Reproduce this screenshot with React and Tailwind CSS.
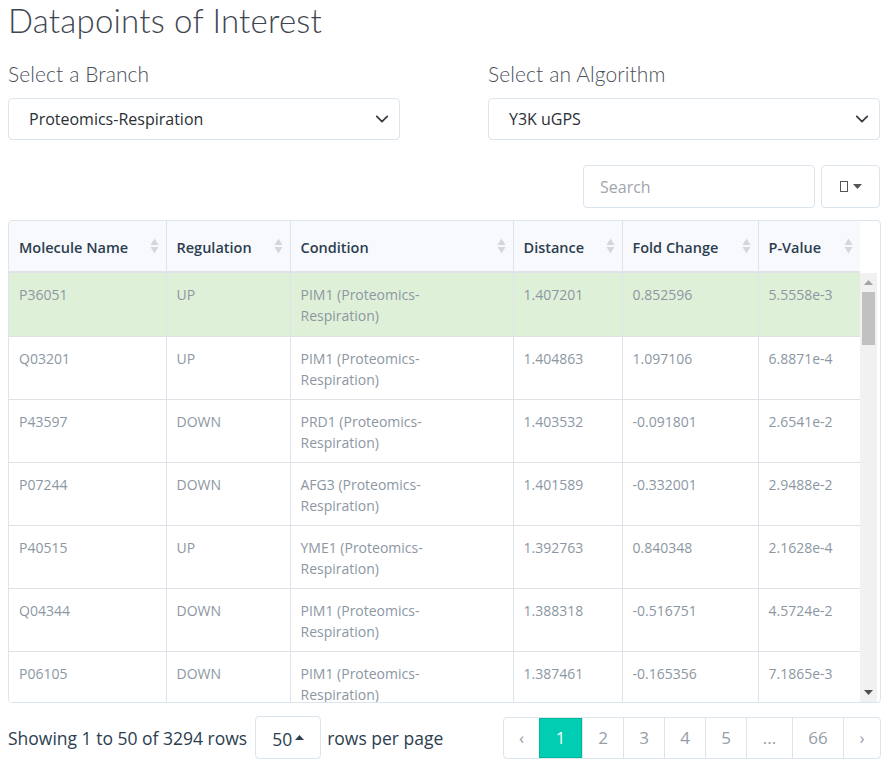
import React from "react";

const rows = [
  ["P36051", "UP", "PIM1", "1.407201", "0.852596", "5.5558e-3", true],
  ["Q03201", "UP", "PIM1", "1.404863", "1.097106", "6.8871e-4"],
  ["P43597", "DOWN", "PRD1", "1.403532", "-0.091801", "2.6541e-2"],
  ["P07244", "DOWN", "AFG3", "1.401589", "-0.332001", "2.9488e-2"],
  ["P40515", "UP", "YME1", "1.392763", "0.840348", "2.1628e-4"],
  ["Q04344", "DOWN", "PIM1", "1.388318", "-0.516751", "4.5724e-2"],
  ["P06105", "DOWN", "PIM1", "1.387461", "-0.165356", "7.1865e-3"],
];

const cols = [
  ["Molecule Name", "w-[157px]"],
  ["Regulation", "w-[124px]"],
  ["Condition", "w-[223px]"],
  ["Distance", "w-[109px]"],
  ["Fold Change", "w-[136px]"],
  ["P-Value", "w-[102px]"],
];

function SortIcon() {
  return (
    <svg width="9" height="17" viewBox="0 0 9 17" className="absolute right-[7px] top-1/2 -translate-y-1/2">
      <path d="M4.5 1 L8.5 7.5 L0.5 7.5 Z" fill="#d3d6da" />
      <path d="M4.5 16 L8.5 9.5 L0.5 9.5 Z" fill="#d3d6da" />
    </svg>
  );
}

function Chevron() {
  return (
    <svg width="14" height="14" viewBox="0 0 16 16" className="absolute right-[10px] top-1/2 -translate-y-1/2">
      <path d="M2 5 L8 11 L14 5" fill="none" stroke="#343a40" strokeWidth="2" strokeLinecap="round" strokeLinejoin="round" />
    </svg>
  );
}

export default function App() {
  return (
    <div className="w-[896px] h-[775px] overflow-hidden bg-white text-[#2c3e50]" style={{ fontFamily: '"Open Sans", sans-serif' }}>
      <div className="px-[8px]">
        <h1 className="text-[33px] leading-[40px] font-light text-[#3f4650] tracking-[0.2px]" style={{ fontFamily: 'Lato, sans-serif' }}>
          Datapoints of Interest
        </h1>
        <div className="flex mt-[20px]">
          <div className="w-[480px]">
            <div className="text-[21px] leading-[28px] font-light text-[#4a5058] tracking-[0.1px]" style={{ fontFamily: 'Lato, sans-serif' }}>Select a Branch</div>
            <div className="relative mt-[10px] w-[392px] h-[42px] border border-[#dce4ec] rounded-[4px] flex items-center pl-[20px] text-[16px] text-[#2a2f36]">
              Proteomics-Respiration
              <Chevron />
            </div>
          </div>
          <div className="w-[392px]">
            <div className="text-[21px] leading-[28px] font-light text-[#4a5058] tracking-[0.1px]" style={{ fontFamily: 'Lato, sans-serif' }}>Select an Algorithm</div>
            <div className="relative mt-[10px] w-[392px] h-[42px] border border-[#dce4ec] rounded-[4px] flex items-center pl-[20px] text-[16px] text-[#2a2f36]">
              Y3K uGPS
              <Chevron />
            </div>
          </div>
        </div>

        <div className="flex justify-end gap-[6px] mt-[25px] w-[872px]">
          <div className="w-[232px] h-[43px] border border-[#dce4ec] rounded-[4px] flex items-center pl-[16px] text-[16px] text-[#a0a5ab]">
            Search
          </div>
          <div className="w-[59px] h-[43px] border border-[#dce4ec] rounded-[4px] flex items-center justify-center gap-[5px]">
            <span className="inline-block w-[8px] h-[11px] border border-[#555]"></span>
            <svg width="9" height="5" viewBox="0 0 9 5"><path d="M0 0 L9 0 L4.5 5 Z" fill="#555" /></svg>
          </div>
        </div>

        <div className="mt-[12px] w-[873px] h-[483px] border border-[#dce4ec] rounded-[4px] overflow-hidden flex flex-col">
          <div className="flex">
            <table className="table-fixed border-collapse w-[851px]">
              <thead>
                <tr className="bg-[#f8f9fc] border-b-2 border-[#dee2e6]">
                  {cols.map(([c, w], i) => (
                    <th key={c} className={`${w} relative h-[51px] px-[10px] pt-[3px] text-left text-[14.5px] font-semibold text-[#2c3e50] ${i > 0 ? "border-l border-[#dce4ec]" : ""}`}>
                      {c}
                      <SortIcon />
                    </th>
                  ))}
                </tr>
              </thead>
            </table>
            <div className="flex-1"></div>
          </div>
          <div className="flex flex-1 overflow-hidden">
            <div className="w-[851px] overflow-hidden">
              <table className="table-fixed border-collapse w-[851px]">
                <tbody>
                  {rows.map((r) => (
                    <tr key={r[0]} className={`${r[6] ? "bg-[#dff0d8]" : "bg-white"} border-b border-[#dee2e6] text-[14px] leading-[21px] text-[#8c97a3] align-top`}>
                      <td className="w-[157px] px-[10px] pt-[11px] pb-[9px] h-[63px]">{r[0]}</td>
                      <td className="w-[124px] px-[10px] pt-[11px] pb-[9px] border-l border-[#dce4ec]">{r[1]}</td>
                      <td className="w-[223px] px-[10px] pt-[11px] pb-[9px] border-l border-[#dce4ec]">{r[2]} (Proteomics-<br />Respiration)</td>
                      <td className="w-[109px] px-[10px] pt-[11px] pb-[9px] border-l border-[#dce4ec]">{r[3]}</td>
                      <td className="w-[136px] px-[10px] pt-[11px] pb-[9px] border-l border-[#dce4ec]">{r[4]}</td>
                      <td className="w-[102px] px-[10px] pt-[11px] pb-[9px] border-l border-[#dce4ec]">{r[5]}</td>
                    </tr>
                  ))}
                </tbody>
              </table>
            </div>
            <div className="w-[17px] bg-[#f1f1f1] flex flex-col items-center">
              <svg width="9" height="5" viewBox="0 0 9 5" className="mt-[7px]"><path d="M0 5 L9 5 L4.5 0 Z" fill="#a3a3a3" /></svg>
              <div className="w-[17px] px-[2px] mt-[7px]">
                <div className="h-[53px] bg-[#c1c1c1]"></div>
              </div>
              <div className="flex-1"></div>
              <svg width="9" height="5" viewBox="0 0 9 5" className="mb-[7px]"><path d="M0 0 L9 0 L4.5 5 Z" fill="#505050" /></svg>
            </div>
            <div className="w-[3px]"></div>
          </div>
        </div>

        <div className="flex items-center mt-[13px] w-[873px] h-[43px]">
          <span className="text-[17.5px] leading-[24px] text-[#2c3e50] whitespace-nowrap">Showing 1 to 50 of 3294 rows</span>
          <div className="ml-[8px] w-[66px] h-[43px] border border-[#dce4ec] rounded-[4px] flex items-center justify-center gap-[3px] text-[17.5px] leading-[24px] text-[#2c3e50]">
            <span className="mt-[2px]">50</span>
            <svg width="9" height="5" viewBox="0 0 9 5"><path d="M0 5 L9 5 L4.5 0 Z" fill="#2c3e50" /></svg>
          </div>
          <span className="ml-[6px] text-[17.5px] leading-[24px] text-[#2c3e50] whitespace-nowrap">rows per page</span>
          <div className="ml-auto flex h-[42px] border border-[#dce4ec] rounded-[4px] overflow-hidden text-[17px] leading-[24px] text-[#959ea8]">
            <div className="w-[35px] flex items-center justify-center">‹</div>
            <div className="w-[43px] flex items-center justify-center bg-[#00cdb1] text-white border border-[#00b89e]">1</div>
            {["2", "3", "4", "5"].map((p) => (
              <div key={p} className="w-[41px] flex items-center justify-center border-l border-[#dce4ec]">{p}</div>
            ))}
            <div className="w-[46px] flex items-center justify-center border-l border-[#dce4ec]">...</div>
            <div className="w-[51px] flex items-center justify-center border-l border-[#dce4ec]">66</div>
            <div className="w-[37px] flex items-center justify-center border-l border-[#dce4ec]">›</div>
          </div>
        </div>
      </div>
    </div>
  );
}
